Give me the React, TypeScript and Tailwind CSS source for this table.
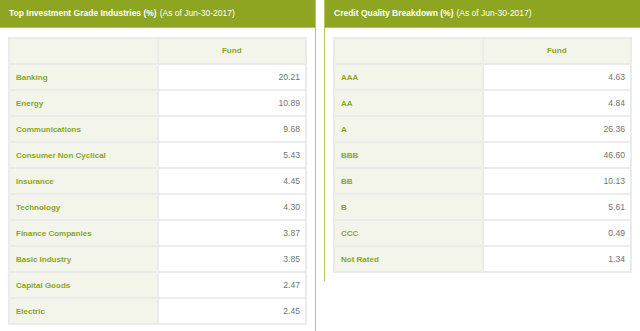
type Row = { label: string; value: string };

const industries: Row[] = [
  { label: "Banking", value: "20.21" },
  { label: "Energy", value: "10.89" },
  { label: "Communications", value: "9.68" },
  { label: "Consumer Non Cyclical", value: "5.43" },
  { label: "Insurance", value: "4.45" },
  { label: "Technology", value: "4.30" },
  { label: "Finance Companies", value: "3.87" },
  { label: "Basic Industry", value: "3.85" },
  { label: "Capital Goods", value: "2.47" },
  { label: "Electric", value: "2.45" },
];

const credit: Row[] = [
  { label: "AAA", value: "4.63" },
  { label: "AA", value: "4.84" },
  { label: "A", value: "26.36" },
  { label: "BBB", value: "46.60" },
  { label: "BB", value: "10.13" },
  { label: "B", value: "5.61" },
  { label: "CCC", value: "0.49" },
  { label: "Not Rated", value: "1.34" },
];

const DataTable = ({ rows }: { rows: Row[] }) => (
  <table className="w-full table-fixed border-collapse border-2 border-[#ebebeb]">
    <thead>
      <tr className="h-[26px]">
        <th className="w-1/2 bg-[#f3f5ea] border-2 border-[#ebebeb]" />
        <th className="w-1/2 bg-[#f3f5ea] border-2 border-[#ebebeb] text-[8px] font-bold text-[#8ba51f] text-center">
          Fund
        </th>
      </tr>
    </thead>
    <tbody>
      {rows.map((row) => (
        <tr key={row.label} className="h-[26px]">
          <td className="bg-[#f3f5ea] border-2 border-[#ebebeb] pl-[6px] pt-[1px] text-[8px] font-bold text-[#8ba51f] text-left">
            {row.label}
          </td>
          <td className="bg-white border-2 border-[#ebebeb] pr-[5px] text-[8.6px] text-[#737373] text-right">
            {row.value}
          </td>
        </tr>
      ))}
    </tbody>
  </table>
);

const Panel = ({
  title,
  rows,
  className,
}: {
  title: string;
  rows: Row[];
  className: string;
}) => (
  <div className={`flex flex-col w-[316px] ${className}`}>
    <div className="h-[28px] flex items-center pl-[9px] bg-[#8da521] border-b border-[#b2c45a] text-white text-[8.5px] leading-none">
      <span className="font-bold">{title}</span>
      <span className="ml-[3px]">(As of Jun-30-2017)</span>
    </div>
    <div className="pt-[9px] px-[8px] pb-[8px]">
      <DataTable rows={rows} />
    </div>
  </div>
);

export default function App() {
  return (
    <div
      className="w-[640px] h-[331px] overflow-hidden bg-white flex items-start gap-[8px]"
      style={{ fontFamily: '"Liberation Sans", Arial, sans-serif' }}
    >
      <Panel
        title="Top Investment Grade Industries (%)"
        rows={industries}
        className="self-stretch h-[340px] border-r border-[#b4c75a]"
      />
      <Panel
        title="Credit Quality Breakdown (%)"
        rows={credit}
        className="border-l border-[#b4c75a]"
      />
    </div>
  );
}
